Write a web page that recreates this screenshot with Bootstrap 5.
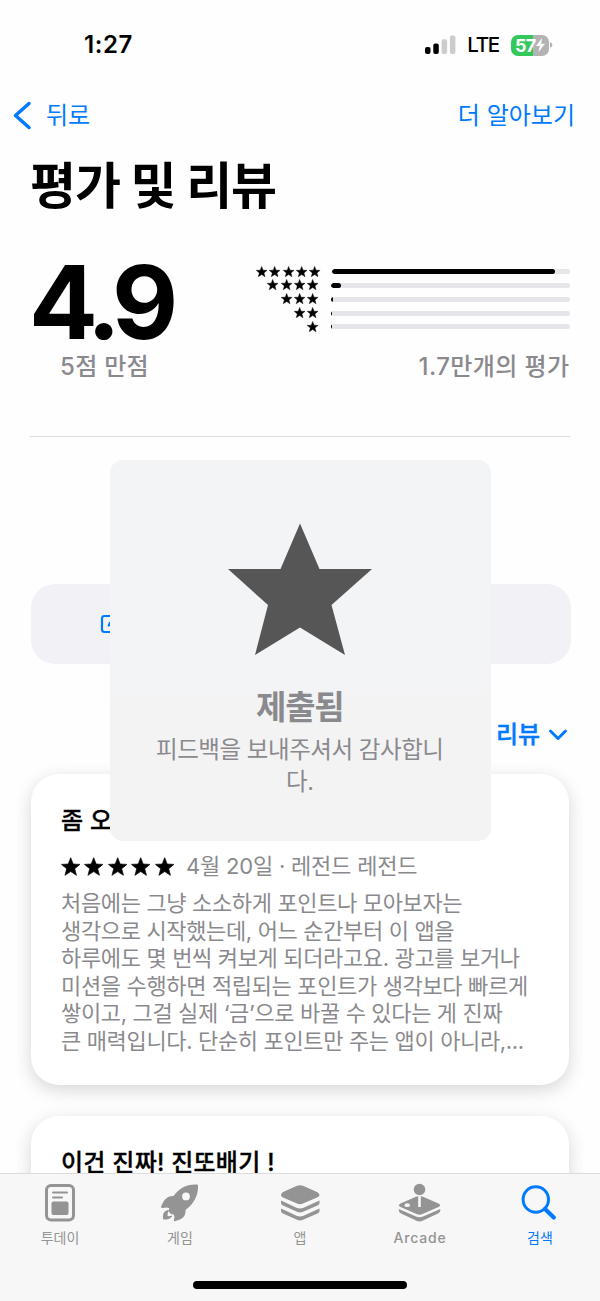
<!DOCTYPE html>
<html lang="ko">
<head>
<meta charset="utf-8">
<meta name="viewport" content="width=device-width, initial-scale=1">
<title>평가 및 리뷰</title>
<link rel="stylesheet" href="https://cdn.jsdelivr.net/npm/bootstrap@5.3.0/dist/css/bootstrap.min.css">
<style>
:root{--ios-blue:#007aff;--ios-gray:#8a8a8e}
body{font-family:Inter,"Noto Sans CJK KR",sans-serif;background:#fefefe;color:#000;margin:0}
svg{display:block;flex:none}
.screen{width:600px;height:1301px;background:#fefefe}
.blue{color:var(--ios-blue)}
.gray{color:var(--ios-gray)}
.status{height:90px;padding:0 47px 0 84px}
.clock{font-size:24px;font-weight:600;letter-spacing:.6px}
.net{font-size:20.5px;font-weight:500;letter-spacing:-1.2px;margin:0 12px 0 11px}
.battery{width:38px;height:21px;border-radius:7px;background:linear-gradient(90deg,#34c759 22px,#b3b3b3 22px);color:#fff;font-size:18px;font-weight:700;letter-spacing:-.8px;padding-left:4px}
.topnav{height:52px;padding:0 25px 0 12px;font-size:24px}
.title{font-size:50px;font-weight:700;line-height:60px;margin:14px 0 0 30px;letter-spacing:-1.1px}
.summary{margin:47px 30px 0 30px;height:174px;border-bottom:1px solid #dcdcde}
.score{font-size:102px;font-weight:700;line-height:78px;height:78px;letter-spacing:-7.7px;margin-left:-1px}
.sub{font-size:24px;font-weight:500;line-height:32px}
.bars{width:315px;padding:2px .5px 0 0}
.rate{height:13.75px}
.rate .track{width:239px;height:5px;border-radius:3px;background:#e5e5ea;overflow:hidden}
.rate .fill{height:5px;border-radius:3px;background:#000}
.write{height:80px;border-radius:24px;background:#f2f1f6;margin:147px 29px 0 31px;padding-left:69px}
.sort{height:40px;margin:51px 32px 0 0;font-size:24px;font-weight:500;letter-spacing:-.1px}
.sort,.review h2{-webkit-text-stroke:.35px currentColor}
.review{width:538px;height:311px;border-radius:28px;background:#fff;margin:19px 0 0 31px;padding:32px 30px 0;box-shadow:0 5px 18px rgba(0,0,0,.16)}
.review + .review{margin-top:31px}
.review h2{font-size:24px;font-weight:500;line-height:30px;margin:0;letter-spacing:.25px}
.meta{height:32px;margin-top:14px;font-size:22px}
.meta .name{margin-left:10px;letter-spacing:-.2px}
.text{font-size:22px;line-height:27.6px;margin:8px 0 0;white-space:nowrap;letter-spacing:-.35px}
.toast-box{left:109.5px;top:460px;width:381.5px;height:381px;border-radius:13px;background:linear-gradient(#f3f4f6 50%,#f3f3f3 75%);padding-right:1px}
.toast-box svg{margin-top:63px}
.toast-title{font-size:33px;font-weight:700;line-height:44px;margin-top:29px;letter-spacing:-1.2px}
.toast-text{font-size:23.5px;line-height:32px;margin-top:5px;letter-spacing:-.45px}
.tabs{left:0;top:1173px;width:600px;height:128px;background:#f7f7f7;border-top:1.5px solid #dcdcdc;color:#949494}
.tab{width:120px;padding-top:9px;font-size:14px;font-weight:400}
.tab span{line-height:20px;margin-top:4.5px}
.tab .arcade{font-weight:500;letter-spacing:.8px}
.home{width:214px;height:8px;border-radius:4px;background:#000;left:193px;top:107px}
</style>
</head>
<body>
<svg width="0" height="0" class="position-absolute"><defs>
<path id="star" d="M12 .8l2.900 7.500 8 .4-6.200 5.100 2.100 7.800L12 17.200l-6.800 4.400 2.100-7.800L1.100 8.700l8-.4z" stroke="currentColor" stroke-width=".8" stroke-linejoin="round"/>
</defs></svg>
<div class="screen position-relative overflow-hidden">
  <header class="status d-flex align-items-center">
    <div class="clock me-auto">1:27</div>
    <svg width="31" height="20" viewBox="0 0 31 20"><rect x="0" y="12" width="5.500" height="7" rx="2"/><rect x="8.300" y="8.500" width="5.500" height="10.500" rx="2"/><g fill="#ccc"><rect x="16.600" y="4.300" width="5.500" height="14.700" rx="2"/><rect x="24.900" y="0.500" width="5.500" height="18.500" rx="2"/></g></svg>
    <div class="net">LTE</div>
    <div class="battery d-flex align-items-center">57<svg class="ms-auto me-1" width="9" height="14" viewBox="0 0 9 14"><path fill="#fff" d="M6 0L0 8h3.700L2.500 14 9 5.800H5.200z"/></svg></div>
    <svg width="4" height="8" viewBox="0 0 4 8"><path fill="#b3b3b3" d="M1 1q5 3 0 6z"/></svg>
  </header>
  <nav class="topnav d-flex align-items-center blue">
    <svg width="20" height="30" viewBox="0 0 20 30"><path d="M17 2.500L3.500 14.500 17 26.500" fill="none" stroke="currentColor" stroke-width="3.500" stroke-linecap="round" stroke-linejoin="round"/></svg>
    <span class="me-auto" style="margin-left:14px">뒤로</span><span>더 알아보기</span>
  </nav>
  <h1 class="title">평가 및 리뷰</h1>
  <section class="summary d-flex justify-content-between">
    <div><div class="score">4.9</div><div class="sub gray" style="margin:10px 0 0 30px;letter-spacing:.3px">5점 만점</div></div>
    <div class="bars" id="bars"></div>
  </section>
  <div class="write d-flex align-items-center blue">
    <svg width="20" height="20" viewBox="0 0 20 20" fill="none" stroke="currentColor" stroke-width="2.200" stroke-linecap="round"><path d="M12 2H4.500Q2 2 2 4.500v11Q2 18 4.500 18h11q2.500 0 2.500-2.500V9M8.800 11.500l1-2.500 8-8"/></svg>
  </div>
  <div class="sort d-flex align-items-center justify-content-end blue">리뷰<svg class="ms-2" width="20" height="14" viewBox="0 0 20 14"><path d="M2.500 3L10 10.500 17.500 3" fill="none" stroke="currentColor" stroke-width="3" stroke-linecap="round" stroke-linejoin="round"/></svg></div>
  <article class="review">
    <h2>좀 오</h2>
    <div class="meta d-flex align-items-center"><div id="stars" class="d-flex" style="margin:1px 0 0 -2px"></div><span class="gray name">4월 20일 · 레전드 레전드</span></div>
    <p class="text gray">처음에는 그냥 소소하게 포인트나 모아보자는<br>생각으로 시작했는데, 어느 순간부터 이 앱을<br>하루에도 몇 번씩 켜보게 되더라고요. 광고를 보거나<br>미션을 수행하면 적립되는 포인트가 생각보다 빠르게<br>쌓이고, 그걸 실제 ‘금’으로 바꿀 수 있다는 게 진짜<br>큰 매력입니다. 단순히 포인트만 주는 앱이 아니라,...</p>
  </article>
  <article class="review"><h2>이건 진짜! 진또배기 !</h2></article>

  <div class="toast-box position-absolute d-flex flex-column align-items-center text-center gray">
    <svg width="146" height="133" viewBox="0 0 146 133"><path fill="#565656" d="M73 .5L92.500 46H145L104.500 82 118 132 73 104.500 28 132 41 82 1 46H53.500z"/></svg>
    <div class="toast-title">제출됨</div>
    <div class="toast-text">피드백을 보내주셔서 감사합니<br>다.</div>
  </div>

  <nav class="tabs position-absolute d-flex">
    <div class="tab d-flex flex-column align-items-center">
      <svg width="40" height="40" viewBox="0 0 40 40"><rect x="6.500" y="2.500" width="27" height="34.500" rx="4.500" fill="none" stroke="currentColor" stroke-width="3"/><path d="M13 9.500h14M13 14.500h9" stroke="currentColor" stroke-width="2" stroke-linecap="round"/><rect x="11.500" y="18.500" width="17" height="13.500" rx="2" fill="currentColor"/></svg><span>투데이</span></div>
    <div class="tab d-flex flex-column align-items-center">
      <svg width="40" height="40" viewBox="0 0 40 40" fill="currentColor"><path fill-rule="evenodd" d="M37 1.500C27 .8 19 5 13.500 13 8 12.500 4 16 1.200 23.500q-.5 2 1.500 1.500 4-1.200 6.500 0c-1 4 0 6 4.500 6.500q1.500 2.500.2 5.500-.5 1.500 1.500 1C22.500 36.500 26 33 25.500 27 34 21 38.500 12 38 2.500q0-1-1-1zM26 9.500a3.900 3.900 0 1 1 0 7.800 3.900 3.900 0 1 1 0-7.800z"/><path d="M8.500 27.500C4 28 3 31 3.500 36q6 .7 8.500-3-3.500 1.500-5 .3Q6.500 30 8.500 27.500z" stroke="currentColor" stroke-width="1"/></svg><span>게임</span></div>
    <div class="tab d-flex flex-column align-items-center">
      <svg width="40" height="40" viewBox="0 0 40 40" fill="currentColor"><path d="M17 2.800Q20 1.500 23 2.800L37 9q2.500 1.500 2.500 3T37 14.500L23 20.500q-3 1.300-6 0L3 14.500Q1 13.500 1 12t2-3z"/><path d="M1 17.500l15.500 7.200q3.500 1.500 7 0l16-7.200v2.500q0 1.500-2 2.500L23 28.800q-3 1.400-6 0L3 22.500q-2-1-2-2.500zM1 25.500l15.500 7.200q3.500 1.500 7 0l16-7.200V28q0 1.500-2 2.500L23 36.800q-3 1.400-6 0L3 30.500Q1 29.500 1 28z"/></svg><span>앱</span></div>
    <div class="tab d-flex flex-column align-items-center">
      <svg width="44" height="40" viewBox="0 0 44 40" fill="currentColor"><circle cx="21.500" cy="6.500" r="5.800"/><path d="M18 13.700L2.500 20.500q-3 1.700 0 3.500L18.500 31q3 1.300 6 0L40.500 24q3-1.800 0-3.500L25 13.700q-3.500-1.200-7 0z"/><path d="M20.200 12.800h2.600V24h-2.600z" fill="#f7f7f7"/><ellipse cx="9.300" cy="22.200" rx="2.700" ry="1.900" fill="#f7f7f7"/><path d="M.7 26L18 33.500q3.500 1.500 7 0L42.300 26q.3 3.200-2.300 4.500L24.500 37.700q-3 1.400-6 0L3 30.500Q.5 29.200.7 26z"/></svg><span class="arcade">Arcade</span></div>
    <div class="tab d-flex flex-column align-items-center blue">
      <svg width="40" height="40" viewBox="0 0 40 40" fill="none" stroke="currentColor" stroke-linecap="round"><circle cx="15.800" cy="16.500" r="12.700" stroke-width="3"/><path d="M25 26L33.800 34.500" stroke-width="4.200"/></svg><span>검색</span></div>
    <div class="home position-absolute"></div>
  </nav>
</div>
<script src="https://cdn.jsdelivr.net/npm/bootstrap@5.3.0/dist/js/bootstrap.bundle.min.js"></script>
<script>
const star = (size, box) => `<svg width="${box}" height="${size}" viewBox="0 0 24 23"><use href="#star"/></svg>`;
const shares = [223, 10.5, 2.5, .5, 1.2];
document.getElementById('bars').innerHTML = shares.map((w, i) =>
  `<div class="rate d-flex align-items-center justify-content-end"><div class="d-flex" style="margin:0 11px 1px 0">${star(11.5, 13.3).repeat(5 - i)}</div><div class="track"><div class="fill" style="width:${w}px"></div></div></div>`
).join('') + '<div class="sub gray text-end" style="margin-top:17px;letter-spacing:.4px">1.7만개의 평가</div>';
document.getElementById('stars').innerHTML = star(19.5, 23.4).repeat(5);
</script>
</body>
</html>
